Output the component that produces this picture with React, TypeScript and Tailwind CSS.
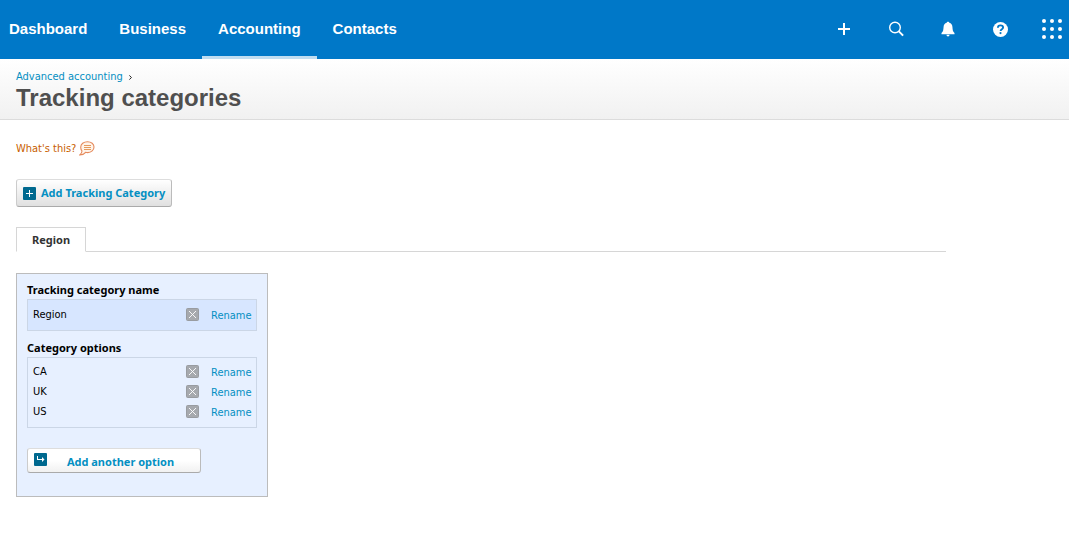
import React, { useState } from "react";

const navItems = ["Dashboard", "Business", "Accounting", "Contacts"];
const initialOptions = ["CA", "UK", "US"];

const PlusIcon = () => (
  <svg width="12" height="12" viewBox="0 0 12 12" fill="#fff">
    <path d="M5 0h2v5h5v2H7v5H5V7H0V5h5z" />
  </svg>
);

const SearchIcon = () => (
  <svg width="16" height="16" viewBox="0 0 16 16" fill="none" stroke="#fff">
    <circle cx="7" cy="6.5" r="5.3" strokeWidth="1.4" />
    <path d="M10.9 10.4l4.2 4.2" strokeWidth="2" />
  </svg>
);

const BellIcon = () => (
  <svg width="14" height="16" viewBox="0 0 14 16" fill="#fff">
    <path d="M7 .8c.8 0 1.200.4 1.300 1 2 .6 2.900 2 3.100 4 .3 2.600.2 5 2.100 6.200v1.200H.5V12c1.900-1.200 1.800-3.600 2.100-6.200.2-2 1.100-3.400 3.100-4 .1-.6.5-1 1.300-1z" />
    <path d="M5.500 13.700h3c0 1-.6 1.700-1.500 1.700s-1.500-.7-1.500-1.700z" />
  </svg>
);

const HelpIcon = () => (
  <svg width="16" height="16" viewBox="0 0 16 16" fill="none">
    <circle cx="8.500" cy="8.500" r="7.5" fill="#fff" />
    <path
      d="M5.900 6.800c0-1.600 1-2.400 2.500-2.400s2.700.8 2.700 2.100c0 1.700-2.500 1.700-2.500 3.500"
      stroke="#0078c8"
      strokeWidth="1.900"
    />
    <circle cx="8.500" cy="12.100" r="1.100" fill="#0078c8" />
  </svg>
);

const AppsIcon = () => (
  <svg width="20" height="20" viewBox="0 0 20 20" fill="#fff">
    {[2, 10, 18].map((y) =>
      [2, 10, 18].map((x) => <circle key={`${x}-${y}`} cx={x} cy={y} r="2" />)
    )}
  </svg>
);

const SpeechIcon = () => (
  <svg width="16" height="15" viewBox="0 0 16 15" fill="none">
    <path
      d="M8.500.7c3.800 0 6.500 2.300 6.500 5.300s-2.700 5.600-6.300 5.600c-.8 0-1.500-.1-2.100-.3C5.500 12.800 3.500 13.800.8 13.900c1.300-.9 2-2.200 2.200-3.900C2.100 9 1.700 7.800 1.700 6.300 1.700 3.100 4.700.7 8.500.7z"
      fill="#fff4ea"
      stroke="#e58a5c"
      strokeWidth="1.100"
    />
    <path d="M5 4.500h7M5 6.500h7M5 8.500h7" stroke="#e59a5c" />
  </svg>
);

const AddIcon = () => (
  <svg width="13" height="13" viewBox="0 0 13 13">
    <rect width="13" height="13" rx="1" fill="#00698f" />
    <path d="M6 3h1v3h3v1H7v3H6V7H3V6h3z" fill="#fff" />
  </svg>
);

const ArrowIcon = () => (
  <svg width="13" height="13" viewBox="0 0 13 13">
    <rect width="13" height="13" rx="1" fill="#00698f" />
    <path d="M3 3h1v3h4V4l2.500 2.500L8 9V7H3z" fill="#fff" />
  </svg>
);

const DeleteIcon = () => (
  <svg width="13" height="13" viewBox="0 0 13 13">
    <rect x=".5" y=".5" width="12" height="12" rx="1" fill="#a6a9ae" stroke="#999ca1" />
    <path d="M3 3l7 7M10 3l-7 7" stroke="#fff" strokeWidth=".9" />
  </svg>
);

const actions = [
  { label: "Create new", icon: PlusIcon },
  { label: "Search", icon: SearchIcon },
  { label: "Notifications", icon: BellIcon },
  { label: "Help", icon: HelpIcon },
];

const Header = () => (
  <header className="flex justify-between bg-[#0078c8] h-[59px]">
    <nav className="flex pl-[9px] font-['Liberation_Sans',Arial,sans-serif] text-[15px] font-bold text-white">
      {navItems.map((item) => (
        <a
          key={item}
          href="#"
          aria-current={item === "Accounting" ? "page" : undefined}
          className={`flex items-center border-b-3 px-4 pt-[2px] first:pl-0 ${
            item === "Accounting" ? "border-b-[#c0ddf1]" : "border-b-transparent"
          }`}
        >
          {item}
        </a>
      ))}
    </nav>
    <div className="flex pb-px">
      {actions.map(({ label, icon: Icon }) => (
        <button
          key={label}
          aria-label={label}
          className="flex w-[52px] items-center justify-center"
        >
          <Icon />
        </button>
      ))}
      <button aria-label="Apps" className="flex items-center pl-4 pr-[7px]">
        <AppsIcon />
      </button>
    </div>
  </header>
);

const Row = ({ name, onDelete }: { name: string; onDelete?: () => void }) => (
  <li className="flex h-5 items-center px-[5px]">
    <span className="flex-1 text-black">{name}</span>
    <button aria-label={`Delete ${name}`} onClick={onDelete} className="mr-3 pb-px">
      <DeleteIcon />
    </button>
    <button aria-label={`Rename ${name}`} className="w-10 pt-[2px] text-left text-[#048fc2]">
      Rename
    </button>
  </li>
);

export default function App() {
  const [options, setOptions] = useState(initialOptions);

  const handleDelete = (name: string) =>
    setOptions(options.filter((option) => option !== name));

  return (
    <div className="bg-white font-['DejaVu_Sans_Condensed','DejaVu_Sans',Tahoma,sans-serif] text-[11px] leading-4 text-black">
      <Header />
      <div className="border-b border-[#dcdcdc] bg-linear-to-b from-white to-[#f1f1f1] px-4 pt-[10px] pb-2">
        <div className="flex items-center gap-[6px]">
          <a href="#" className="text-[#048fc2]">
            Advanced accounting
          </a>
          <svg width="3" height="5" viewBox="0 0 3 5" fill="none" stroke="#222">
            <path d="M.4.4l2 2.100-2 2.100" />
          </svg>
        </div>
        <h1 className="font-['Liberation_Sans',Arial,sans-serif] text-2xl leading-[26px] font-bold text-[#4f4f4f]">
          Tracking categories
        </h1>
      </div>
      <main className="px-4 pt-[21px] pb-11">
        <a href="#" className="flex w-fit items-start gap-[3px] text-[#c85e00]">
          What's this?
          <SpeechIcon />
        </a>
        <button className="mt-[22px] flex h-7 items-center gap-[5px] rounded-[3px] border border-t-[#ddd] border-r-[#bbb] border-b-[#aaa] border-l-[#ccc] bg-linear-to-b from-white to-[#e0e0e0] px-[6px] font-['Noto_Sans',Tahoma,sans-serif] font-bold text-[#048fc2]">
          <AddIcon />
          Add Tracking Category
        </button>
        <div className="mt-5 flex max-w-[930px] border-b border-[#d6d6d6]" role="tablist">
          <button
            role="tab"
            aria-selected="true"
            className="-mb-px h-[25px] border border-b-white border-[#d6d6d6] bg-white px-[15px] font-['Noto_Sans',Tahoma,sans-serif] font-bold text-[#333]"
          >
            Region
          </button>
        </div>
        <section className="mt-[21px] w-[252px] border border-[#bcbcbc] bg-[#e7f0ff] px-[10px] pt-2 pb-[23px]">
          <h2 className="font-['Noto_Sans',Tahoma,sans-serif] font-bold">
            Tracking category name
          </h2>
          <ul className="mt-px border border-[#cbd6e6] bg-[#d7e6ff] py-[5px]">
            <Row name="Region" />
          </ul>
          <h2 className="mt-[9px] font-['Noto_Sans',Tahoma,sans-serif] font-bold">
            Category options
          </h2>
          <ul className="mt-px border border-[#cbd6e6] pt-1 pb-[5px]">
            {options.map((option) => (
              <Row key={option} name={option} onDelete={() => handleDelete(option)} />
            ))}
          </ul>
          <button className="mt-5 flex h-[25px] w-[174px] items-start rounded-[3px] border border-t-[#ddd] border-r-[#bbb] border-b-[#aaa] border-l-[#ccc] bg-linear-to-b from-white from-50% to-[#f1f1f1] px-[6px] pt-1 font-['Noto_Sans',Tahoma,sans-serif] font-bold text-[#048fc2]">
            <ArrowIcon />
            <span className="flex-1 pt-px">Add another option</span>
          </button>
        </section>
      </main>
    </div>
  );
}
